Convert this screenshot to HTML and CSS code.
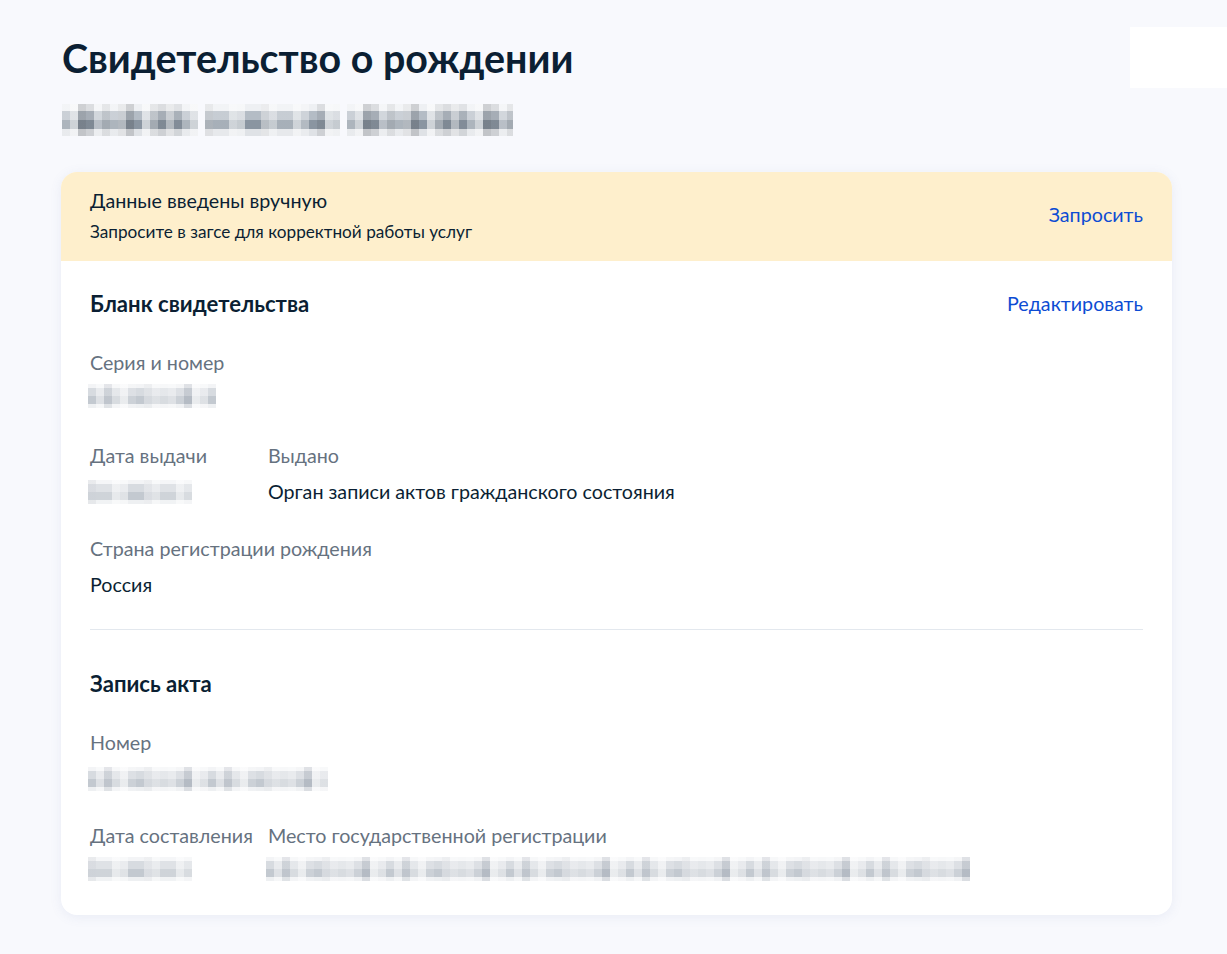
FILE: index.html
```html
<!DOCTYPE html>
<html lang="ru">
<head>
<meta charset="utf-8">
<title>Свидетельство о рождении</title>
<link rel="stylesheet" href="styles.css">
</head>
<body>
<main class="page">
  <header class="head">
    <div class="head-main">
      <h1 class="title">Свидетельство о рождении</h1>
      <div class="name">
        <span class="blur blur-dark" style="width:136px"></span>
        <span class="blur blur-dark alt" style="width:135px"></span>
        <span class="blur blur-dark" style="width:166px"></span>
      </div>
    </div>
    <div class="corner-box"></div>
  </header>

  <section class="card">
    <div class="notice">
      <div class="notice-text">
        <div class="notice-title">Данные введены вручную</div>
        <div class="notice-sub">Запросите в загсе для корректной работы услуг</div>
      </div>
      <a class="link notice-link" href="#">Запросить</a>
    </div>

    <div class="card-body">
      <div class="sec-head">
        <h2 class="sec-title">Бланк свидетельства</h2>
        <a class="link" href="#">Редактировать</a>
      </div>

      <div class="field field-first">
        <div class="label">Серия и номер</div>
        <div class="value"><span class="blur up" style="width:128px"></span></div>
      </div>

      <div class="field-row row-a">
        <div class="field col1">
          <div class="label">Дата выдачи</div>
          <div class="value"><span class="blur alt" style="width:104px"></span></div>
        </div>
        <div class="field">
          <div class="label">Выдано</div>
          <div class="value">Орган записи актов гражданского состояния</div>
        </div>
      </div>

      <div class="field field-country">
        <div class="label">Страна регистрации рождения</div>
        <div class="value">Россия</div>
      </div>

      <hr class="divider">

      <div class="sec-head sec-head-2">
        <h2 class="sec-title">Запись акта</h2>
      </div>

      <div class="field field-first">
        <div class="label">Номер</div>
        <div class="value"><span class="blur" style="width:240px"></span></div>
      </div>

      <div class="field-row row-b">
        <div class="field col1">
          <div class="label">Дата составления</div>
          <div class="value"><span class="blur up alt" style="width:104px"></span></div>
        </div>
        <div class="field">
          <div class="label">Место государственной регистрации</div>
          <div class="value"><span class="blur up" style="width:704px"></span></div>
        </div>
      </div>
    </div>
  </section>
</main>
</body>
</html>
```
FILE: styles.css
```css
* { box-sizing: border-box; }
html, body { margin: 0; padding: 0; }
body {
  background: #f8f9fd;
  font-family: Lato, "Noto Sans", "Liberation Sans", sans-serif;
  color: #0b1f33;
}
.page {
  padding: 27px 55px 40px 61px;
}
.head {
  display: flex;
  justify-content: space-between;
  align-items: flex-start;
}
.head-main { padding-left: 1px; }
.title {
  margin: 7px 0 0;
  font-size: 39.4px;
  line-height: 48px;
  font-weight: 700;
  color: #0b1f33;
}
.corner-box {
  width: 97px;
  height: 61px;
  background: #ffffff;
  margin-right: -55px;
}
.name {
  display: flex;
  gap: 7px;
  margin-top: 22px;
  height: 32px;
}

/* pixelated (blurred) personal data */
.blur {
  display: inline-block;
  height: 24px;
  margin-left: -2px;
  background:
    repeating-linear-gradient(90deg, rgba(255,255,255,0) 0 8px, rgba(255,255,255,0.45) 8px 16px, rgba(255,255,255,0.15) 16px 24px),
    repeating-linear-gradient(90deg, rgba(0,0,0,0) 0 16px, rgba(80,90,110,0.12) 16px 24px, rgba(255,255,255,0.35) 24px 40px),
    linear-gradient(180deg, #f3f4f6 0 4px, #d7dbe0 4px 12px, #c3c9d0 12px 20px, #eef0f2 20px 24px);
}
.blur.alt {
  background:
    repeating-linear-gradient(90deg, rgba(255,255,255,0.35) 0 8px, rgba(0,0,0,0) 8px 24px, rgba(255,255,255,0.5) 24px 32px),
    repeating-linear-gradient(90deg, rgba(90,100,120,0.14) 0 8px, rgba(255,255,255,0.2) 8px 40px, rgba(0,0,0,0) 40px 56px),
    linear-gradient(180deg, #f3f4f6 0 4px, #d7dbe0 4px 12px, #c3c9d0 12px 20px, #eef0f2 20px 24px);
}
.blur.up { transform: translateY(-3px); }
.blur-dark {
  height: 32px;
  margin-left: 0;
  background:
    repeating-linear-gradient(90deg, rgba(255,255,255,0) 0 8px, rgba(255,255,255,0.4) 8px 16px, rgba(0,0,0,0.06) 16px 24px),
    repeating-linear-gradient(90deg, rgba(255,255,255,0.3) 0 16px, rgba(0,0,0,0.08) 16px 32px, rgba(255,255,255,0) 32px 40px),
    linear-gradient(180deg, #eef0f3 0 7px, #b4bcc5 7px 16px, #8a95a1 16px 25px, #dfe2e6 25px 32px);
}
.blur-dark.alt {
  background:
    repeating-linear-gradient(90deg, rgba(255,255,255,0.35) 0 8px, rgba(0,0,0,0) 8px 24px, rgba(255,255,255,0.45) 24px 32px),
    repeating-linear-gradient(90deg, rgba(0,0,0,0.08) 0 8px, rgba(255,255,255,0.25) 8px 40px, rgba(0,0,0,0) 40px 56px),
    linear-gradient(180deg, #eef0f3 0 7px, #b4bcc5 7px 16px, #8a95a1 16px 25px, #dfe2e6 25px 32px);
}

.card {
  margin-top: 36px;
  background: #ffffff;
  border-radius: 16px;
  overflow: hidden;
  box-shadow: 0 2px 12px rgba(100, 120, 180, 0.10);
}
.notice {
  background: #feefcc;
  display: flex;
  justify-content: space-between;
  align-items: center;
  padding: 17.4px 29px 18.6px 29px;
  height: 89px;
}
.notice-title {
  font-size: 19.7px;
  line-height: 24px;
  color: #0b1f33;
}
.notice-sub {
  font-size: 17.2px;
  line-height: 20px;
  margin-top: 9px;
  color: #0b1f33;
}
.link {
  font-size: 19.7px;
  line-height: 24px;
  color: #0d4cd3;
  text-decoration: none;
}
.notice-link { margin-top: -2px; }
.card-body {
  padding: 28.5px 29px 30.5px 29px;
}
.sec-head {
  display: flex;
  justify-content: space-between;
  align-items: center;
  height: 28px;
}
.sec-title {
  margin: 0;
  font-size: 22.1px;
  line-height: 28px;
  font-weight: 700;
  color: #0b1f33;
}
.field { margin-top: 35px; }
.field-first { margin-top: 33px; }
.field-country { margin-top: 33px; }
.field-row {
  display: flex;
  margin-top: 35px;
}
.row-a { margin-top: 33.5px; }
.row-b { margin-top: 33px; }
.field-row .field { margin-top: 0; }
.col1 { width: 178px; flex: none; }
.label {
  font-size: 19.7px;
  line-height: 24px;
  color: #66727f;
}
.value {
  font-size: 19.7px;
  line-height: 24px;
  margin-top: 12px;
  color: #0b1f33;
  height: 24px;
  display: flex;
  align-items: center;
}
.divider {
  border: 0;
  border-top: 1px solid #e3e8ee;
  margin: 32px 0 0;
}
.sec-head-2 { margin-top: 40px; }
```
